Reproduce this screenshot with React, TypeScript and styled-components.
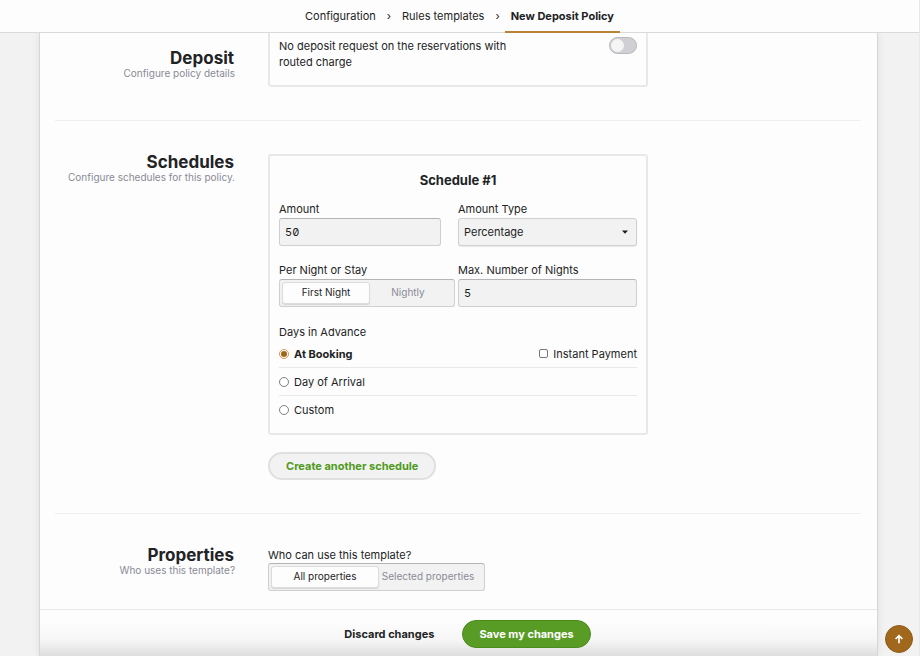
import React, { useState } from "react";
import styled, { createGlobalStyle, css } from "styled-components";

const GlobalStyle = createGlobalStyle`
  *, *::before, *::after { box-sizing: border-box; }
  body {
    margin: 0;
    background: #f2f2f3;
    color: #222325;
    font-family: Inter, "Liberation Sans", sans-serif;
    font-size: 11px;
    line-height: 16px;
  }
  button, input, select { font: inherit; color: inherit; margin: 0; }
  h1, h2, p, ol, fieldset, legend { margin: 0; padding: 0; border: 0; }
`;

const Page = styled.div`
  min-height: 100vh;
  display: flex;
  flex-direction: column;
  border-right: 1px solid #e8e8e8;
`;

const TopBar = styled.header`
  display: flex;
  justify-content: center;
  background: #fdfdfd;
  border-bottom: 1px solid #dadada;
`;

const Crumbs = styled.ol`
  display: flex;
  list-style: none;
`;

const Crumb = styled.li<{ $current?: boolean }>`
  padding: 8px 6px;
  margin-bottom: -1px;
  border-bottom: 2px solid ${(p) => (p.$current ? "#b98335" : "transparent")};
  font-weight: ${(p) => (p.$current ? 700 : 400)};
  height: 33px;
`;

const Separator = styled.li`
  padding: 8px 5px;
`;

const CrumbLink = styled.a`
  color: inherit;
  text-decoration: none;
`;

const Panel = styled.main`
  flex: 1;
  display: flex;
  flex-direction: column;
  margin: 0 41px 0 39px;
  background: #fdfdfd;
  border: solid #d6d6d7;
  border-width: 0 1px;
  box-shadow: 0 0 8px rgba(0, 0, 0, 0.08);
  clip-path: inset(0 -12px);
`;

const Section = styled.section<{ $leading?: boolean }>`
  display: grid;
  grid-template-columns: 180px minmax(0, 380px);
  column-gap: 33px;
  margin: 0 16px 0 15px;
  padding: ${(p) => (p.$leading ? "0 0 33px" : "31px 0 33px")};
  border-bottom: 1px solid #efefef;

  &:last-of-type {
    padding-bottom: 18px;
    border-bottom: 0;
  }
`;

const Intro = styled.div<{ $leading?: boolean }>`
  padding-top: ${(p) => (p.$leading ? "15px" : "0")};
  text-align: right;
`;

const Title = styled.h2`
  padding-right: 1px;
  font-size: 17px;
  line-height: 20px;
  font-weight: 700;
`;

const Subtitle = styled.p`
  font-size: 10px;
  line-height: 10px;
  color: #898a96;
`;

const Body = styled.div<{ $leading?: boolean }>`
  padding-top: ${(p) => (p.$leading ? "0" : "2px")};
`;

const Card = styled.div`
  padding: 16px 9px 10px;
  border: 2px solid #e8e8e9;
  border-radius: 3px;
`;

const SwitchCard = styled(Card)`
  display: flex;
  justify-content: space-between;
  align-items: flex-start;
  padding: 4px 9px 15px;
  border-top: 0;
  border-radius: 0 0 3px 3px;
`;

const SwitchLabel = styled.label`
  max-width: 250px;
  padding-top: 1px;
`;

const Switch = styled.input`
  appearance: none;
  display: flex;
  width: 28px;
  height: 17px;
  padding: 1px;
  border: 1px solid #b9b9be;
  border-radius: 9px;
  background: #cfcfd4;

  &::before {
    content: "";
    width: 13px;
    height: 13px;
    border-radius: 50%;
    background: #f5f5f5;
  }

  &:checked {
    justify-content: flex-end;
    background: #589c26;
  }
`;

const CardTitle = styled.h2`
  font-size: 13px;
  line-height: 16px;
  font-weight: 700;
  text-align: center;
  margin-bottom: 13px;
`;

const FieldGrid = styled.div`
  display: grid;
  grid-template-columns: 176px minmax(0, 1fr);
  column-gap: 3px;
  row-gap: 16px;
`;

const Field = styled.div`
  display: flex;
  flex-direction: column;
  gap: 1px;
`;

const control = css`
  width: 100%;
  height: 28px;
  padding: 0 5px;
  border: 1px solid #cfcfd1;
  border-radius: 3px;
  background: #f2f2f2;
  color: #1c1c1e;
`;

const TextInput = styled.input<{ $short?: boolean }>`
  ${control}
  border-top-color: #b4b4b7;
  font-variant-numeric: tabular-nums slashed-zero;
  max-width: ${(p) => (p.$short ? "162px" : "none")};
`;

const SelectWrap = styled.div`
  display: grid;
  align-items: center;

  > * {
    grid-area: 1 / 1;
  }
`;

const Select = styled.select`
  ${control}
  appearance: none;
  box-shadow: 0 1px 1px rgba(0, 0, 0, 0.08);
`;

const Caret = styled.svg`
  justify-self: end;
  margin-right: 9px;
  pointer-events: none;
`;

const Segments = styled.div<{ $fit?: boolean }>`
  display: grid;
  grid-template-columns: ${(p) => (p.$fit ? "108px 98px" : "88px 76px")};
  width: ${(p) => (p.$fit ? "217px" : "auto")};
  height: 28px;
  padding: 2px;
  border: 1px solid #cfcfd1;
  border-top-color: #b4b4b7;
  border-radius: 3px;
  background: #f2f2f2;
`;

const Segment = styled.button<{ $active?: boolean }>`
  padding: 0 0 2px;
  border: 1px solid ${(p) => (p.$active ? "#dcdcde" : "transparent")};
  border-radius: 3px;
  background: ${(p) => (p.$active ? "#fdfdfd" : "transparent")};
  color: ${(p) => (p.$active ? "#222325" : "#8a8b96")};
  box-shadow: ${(p) => (p.$active ? "0 1px 1px rgba(0, 0, 0, 0.12)" : "none")};
  font-size: 10px;
  line-height: 16px;
  white-space: nowrap;
`;

const Options = styled.fieldset`
  margin-top: 17px;
`;

const OptionsLegend = styled.legend`
  line-height: 16px;
`;

const OptionRow = styled.div`
  display: flex;
  justify-content: space-between;
  align-items: center;
  height: 27px;

  & + & {
    height: 28px;
    border-top: 1px solid #e9e9ea;
  }
`;

const Choice = styled.label<{ $active?: boolean }>`
  display: flex;
  align-items: center;
  gap: 5px;
  font-weight: ${(p) => (p.$active ? 700 : 400)};
`;

const Radio = styled.input`
  appearance: none;
  display: grid;
  place-items: center;
  width: 10px;
  height: 10px;
  border: 1px solid #808084;
  border-radius: 50%;
  background: #ffffff;

  &:checked {
    border-color: #c89a5a;
  }

  &:checked::before {
    content: "";
    width: 6px;
    height: 6px;
    border-radius: 50%;
    background: #a0671a;
  }
`;

const Checkbox = styled.input`
  appearance: none;
  width: 9px;
  height: 9px;
  border: 1px solid #77777b;
  border-radius: 2px;
  background: #ffffff;

  &:checked {
    background: #a0671a;
  }
`;

const PillButton = styled.button<{ $primary?: boolean }>`
  height: 28px;
  padding: 0 16px;
  border: ${(p) => (p.$primary ? "1px solid #4c8b1e" : "2px solid #e0e0e1")};
  border-radius: 14px;
  background: ${(p) => (p.$primary ? "#589c26" : "#f2f2f2")};
  color: ${(p) => (p.$primary ? "#ffffff" : "#4f9a20")};
  font-weight: 700;
`;

const TextButton = styled.button`
  height: 28px;
  padding: 0;
  border: 0;
  background: none;
  font-weight: 700;
`;

const CreateRow = styled.div`
  margin-top: 17px;
`;

const Footer = styled.footer`
  flex: 1;
  display: flex;
  justify-content: center;
  align-items: flex-start;
  gap: 28px;
  padding: 10px 0 8px 18px;
  border-top: 1px solid #e9e9e9;
  background: linear-gradient(#fdfdfd 25%, #f6f6f6 65%, #dedede);
`;

const BackToTop = styled.button`
  position: fixed;
  right: 7px;
  bottom: 3px;
  display: grid;
  place-items: center;
  width: 28px;
  height: 28px;
  padding: 0;
  border: 1px solid #8f5c17;
  border-radius: 50%;
  background: #a0671d;
  color: #ffffff;
`;

function Chooser({
  options,
  fit,
  label,
}: {
  options: string[];
  fit?: boolean;
  label: string;
}) {
  const [selected, setSelected] = useState(options[0]);
  return (
    <Segments $fit={fit} role="group" aria-labelledby={label}>
      {options.map((option) => (
        <Segment
          key={option}
          type="button"
          $active={option === selected}
          aria-pressed={option === selected}
          onClick={() => setSelected(option)}
        >
          {option}
        </Segment>
      ))}
    </Segments>
  );
}

const advanceOptions = ["At Booking", "Day of Arrival", "Custom"];

export default function App() {
  const [advance, setAdvance] = useState(advanceOptions[0]);

  return (
    <>
      <GlobalStyle />
      <Page>
        <TopBar>
          <nav aria-label="Breadcrumb">
            <Crumbs>
              <Crumb>
                <CrumbLink href="#configuration">Configuration</CrumbLink>
              </Crumb>
              <Separator aria-hidden="true">›</Separator>
              <Crumb>
                <CrumbLink href="#templates">Rules templates</CrumbLink>
              </Crumb>
              <Separator aria-hidden="true">›</Separator>
              <Crumb $current aria-current="page">
                New Deposit Policy
              </Crumb>
            </Crumbs>
          </nav>
        </TopBar>

        <Panel>
          <Section $leading>
            <Intro $leading>
              <Title>Deposit</Title>
              <Subtitle>Configure policy details</Subtitle>
            </Intro>
            <Body $leading>
              <SwitchCard>
                <SwitchLabel htmlFor="routed">
                  No deposit request on the reservations with routed charge
                </SwitchLabel>
                <Switch id="routed" type="checkbox" role="switch" />
              </SwitchCard>
            </Body>
          </Section>

          <Section>
            <Intro>
              <Title>Schedules</Title>
              <Subtitle>Configure schedules for this policy.</Subtitle>
            </Intro>
            <Body>
              <Card>
                <CardTitle>Schedule #1</CardTitle>
                <FieldGrid>
                  <Field>
                    <label htmlFor="amount">Amount</label>
                    <TextInput id="amount" $short defaultValue="50" />
                  </Field>
                  <Field>
                    <label htmlFor="amount-type">Amount Type</label>
                    <SelectWrap>
                      <Select id="amount-type" defaultValue="Percentage">
                        <option>Percentage</option>
                        <option>Fixed</option>
                      </Select>
                      <Caret width="6" height="4" viewBox="0 0 6 4" aria-hidden="true">
                        <path d="M0 0.5h6L3 3.8z" fill="#1c1c1e" />
                      </Caret>
                    </SelectWrap>
                  </Field>
                  <Field>
                    <span id="per-night">Per Night or Stay</span>
                    <Chooser label="per-night" options={["First Night", "Nightly"]} />
                  </Field>
                  <Field>
                    <label htmlFor="nights">Max. Number of Nights</label>
                    <TextInput id="nights" defaultValue="5" />
                  </Field>
                </FieldGrid>

                <Options>
                  <OptionsLegend>Days in Advance</OptionsLegend>
                  {advanceOptions.map((option) => (
                    <OptionRow key={option}>
                      <Choice $active={advance === option}>
                        <Radio
                          type="radio"
                          name="advance"
                          checked={advance === option}
                          onChange={() => setAdvance(option)}
                        />
                        {option}
                      </Choice>
                      {option === "At Booking" && (
                        <Choice>
                          <Checkbox type="checkbox" />
                          Instant Payment
                        </Choice>
                      )}
                    </OptionRow>
                  ))}
                </Options>
              </Card>
              <CreateRow>
                <PillButton type="button">Create another schedule</PillButton>
              </CreateRow>
            </Body>
          </Section>

          <Section>
            <Intro>
              <Title>Properties</Title>
              <Subtitle>Who uses this template?</Subtitle>
            </Intro>
            <Body>
              <span id="who">Who can use this template?</span>
              <Chooser fit label="who" options={["All properties", "Selected properties"]} />
            </Body>
          </Section>

          <Footer>
            <TextButton type="button">Discard changes</TextButton>
            <PillButton type="button" $primary>
              Save my changes
            </PillButton>
          </Footer>
        </Panel>
      </Page>

      <BackToTop
        type="button"
        aria-label="Back to top"
        onClick={() => window.scrollTo({ top: 0 })}
      >
        <svg width="10" height="10" viewBox="0 0 10 10" aria-hidden="true">
          <path
            d="M5 9.2V1.8M1.6 5L5 1.6L8.4 5"
            fill="none"
            stroke="currentColor"
            strokeWidth="1.7"
          />
        </svg>
      </BackToTop>
    </>
  );
}
